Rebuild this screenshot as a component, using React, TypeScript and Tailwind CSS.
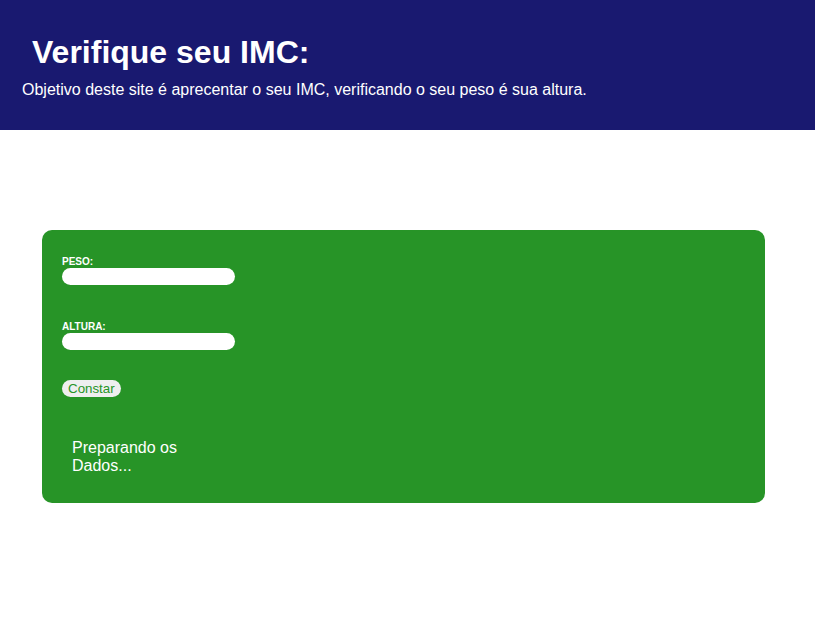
import React, { useState } from 'react';

const App: React.FC = () => {
  const [peso, setPeso] = useState('');
  const [altura, setAltura] = useState('');

  return (
    <div className="min-h-[634px] bg-white font-['Liberation_Sans',Arial,sans-serif]">
      {/* Header */}
      <header className="h-[130px] bg-[#191970] text-white px-[22px] pt-[34px]">
        <h1 className="pl-[10px] text-[32px] font-bold leading-[37px]">Verifique seu IMC:</h1>
        <p className="mt-[10px] text-[16px] leading-[18px]">
          Objetivo deste site é aprecentar o seu IMC, verificando o seu peso é sua altura.
        </p>
      </header>

      {/* Form card */}
      <main className="px-[42px] pt-[100px]">
        <div className="w-[723px] h-[273px] rounded-[10px] bg-[#279427] px-[20px] pt-[26px]">
          <label className="block text-[10px] font-bold leading-[12px] text-white">PESO:</label>
          <input
            value={peso}
            onChange={e => setPeso(e.target.value)}
            className="block w-[173px] h-[17px] rounded-full bg-white border-none outline-none px-2 text-xs"
          />

          <label className="block mt-[36px] text-[10px] font-bold leading-[12px] text-white">ALTURA:</label>
          <input
            value={altura}
            onChange={e => setAltura(e.target.value)}
            className="block w-[173px] h-[17px] rounded-full bg-white border-none outline-none px-2 text-xs"
          />

          <button className="mt-[30px] h-[17px] px-[6px] rounded-full bg-[#efefef] text-[#279427] text-[13.33px] leading-[17px]">
            Constar
          </button>

          <div className="mt-[39px] ml-[10px] w-[140px] text-[16px] leading-[18px] text-white">
            Preparando os Dados...
          </div>
        </div>
      </main>
    </div>
  );
};

export default App;
